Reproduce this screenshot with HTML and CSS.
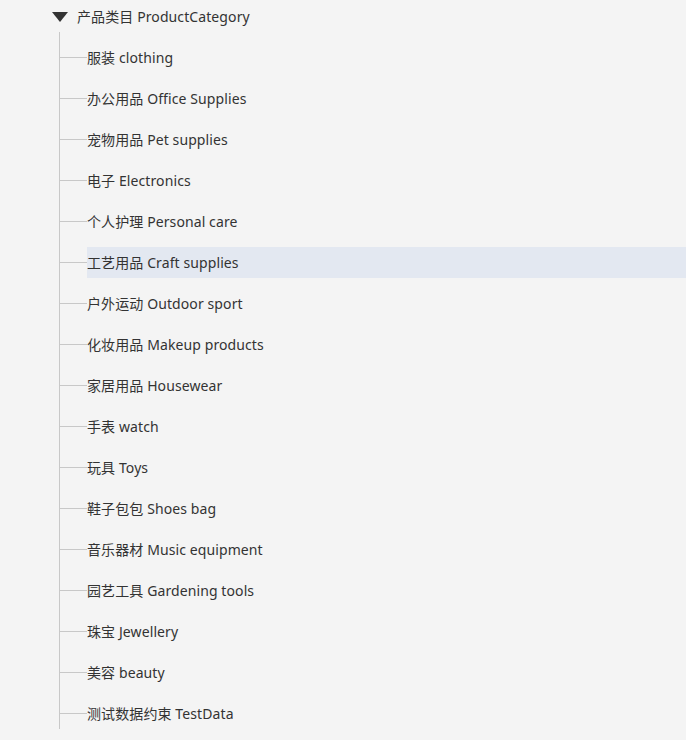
FILE: index.html
```html
<!DOCTYPE html>
<html>
<head>
<meta charset="utf-8">
<link rel="stylesheet" href="styles.css">
</head>
<body>
<div class="tree">
  <div class="root">
    <span class="caret"></span>
    <span class="label">产品类目 ProductCategory</span>
  </div>
  <ul class="children">
    <li class="item"><span class="label">服装 clothing</span></li>
    <li class="item"><span class="label">办公用品 Office Supplies</span></li>
    <li class="item"><span class="label">宠物用品 Pet supplies</span></li>
    <li class="item"><span class="label">电子 Electronics</span></li>
    <li class="item"><span class="label">个人护理 Personal care</span></li>
    <li class="item active"><span class="label">工艺用品 Craft supplies</span></li>
    <li class="item"><span class="label">户外运动 Outdoor sport</span></li>
    <li class="item"><span class="label">化妆用品 Makeup products</span></li>
    <li class="item"><span class="label">家居用品 Housewear</span></li>
    <li class="item"><span class="label">手表 watch</span></li>
    <li class="item"><span class="label">玩具 Toys</span></li>
    <li class="item"><span class="label">鞋子包包 Shoes bag</span></li>
    <li class="item"><span class="label">音乐器材 Music equipment</span></li>
    <li class="item"><span class="label">园艺工具 Gardening tools</span></li>
    <li class="item"><span class="label">珠宝 Jewellery</span></li>
    <li class="item"><span class="label">美容 beauty</span></li>
    <li class="item"><span class="label">测试数据约束 TestData</span></li>
  </ul>
</div>
</body>
</html>
```

FILE: styles.css
```css
html, body {
  margin: 0;
  padding: 0;
  background: #f4f4f4;
}
body {
  font-family: "Noto Sans", "Noto Sans CJK SC", sans-serif;
  font-size: 14px;
  color: #333;
}
.tree {
  padding-top: 1px;
  padding-left: 52px;
}
.root {
  display: flex;
  align-items: center;
  height: 31px;
}
.caret {
  width: 0;
  height: 0;
  border-left: 8px solid transparent;
  border-right: 8px solid transparent;
  border-top: 10px solid #333;
  margin-right: 9px;
  margin-top: 0;
}
.children {
  list-style: none;
  margin: 0 0 0 7px;
  padding: 10px 0 0 0;
  display: flex;
  flex-direction: column;
  gap: 10px;
  background: linear-gradient(#c8c8c8, #c8c8c8) no-repeat 0 0 / 1px 100%;
}
.item {
  position: relative;
  height: 31px;
  display: flex;
  align-items: center;
  padding-left: 28px;
}
.item::before {
  content: "";
  position: absolute;
  left: 1px;
  top: 15px;
  width: 27px;
  height: 1px;
  background: #c8c8c8;
}
.item.active .label {
  background: #e3e8f1;
}
.label {
  display: flex;
  align-items: center;
  height: 31px;
  padding-bottom: 2px;
  box-sizing: border-box;
  white-space: nowrap;
  letter-spacing: 0.1px;
}
.item .label {
  flex: 1;
}
```
